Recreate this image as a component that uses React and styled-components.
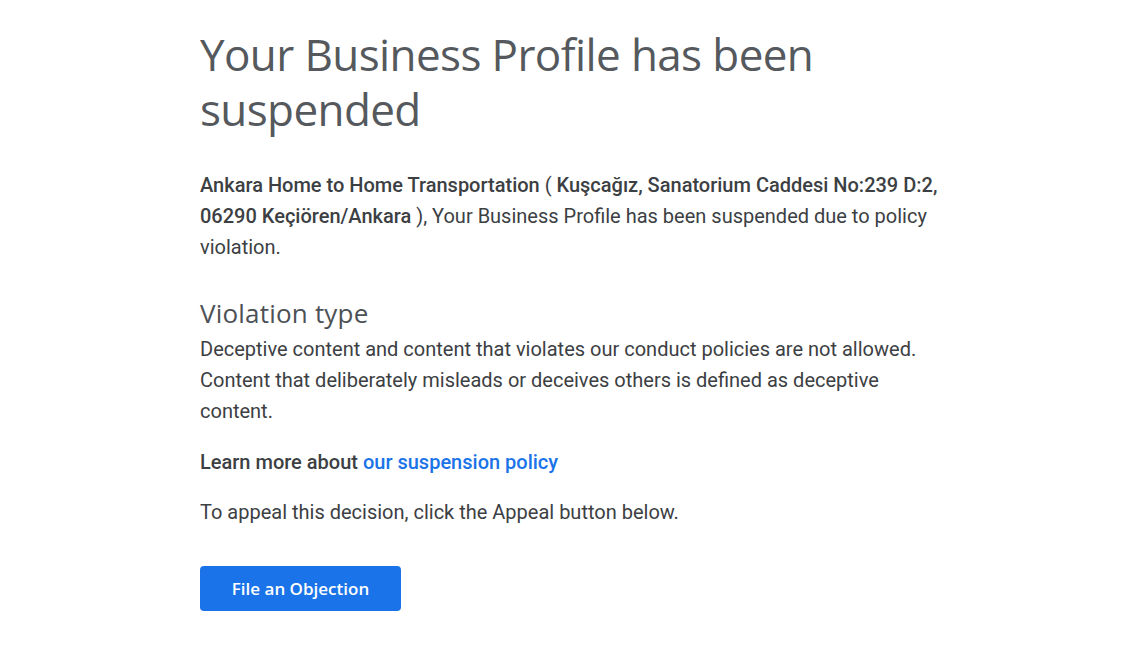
import React from "react";
import styled, { createGlobalStyle } from "styled-components";

const Global = createGlobalStyle`
  html, body { margin: 0; padding: 0; background: #ffffff; }
  body { font-family: Roboto, "Noto Sans", Arial, sans-serif; }
`;

const Page = styled.main`
  width: 745px;
  margin: 0 auto;
  padding-top: 27px;
  display: flex;
  flex-direction: column;
`;

const Title = styled.h1`
  margin: 0;
  font-family: "Open Sans", Inter, sans-serif;
  font-weight: 400;
  font-size: 44px;
  line-height: 55px;
  letter-spacing: -0.6px;
  color: #55595d;
`;

const Paragraph = styled.p`
  margin: ${(p) => p.$mt || 0}px 0 0;
  font-family: Roboto, Arial, sans-serif;
  font-size: 20px;
  line-height: 31px;
  color: #3c4043;
  font-weight: ${(p) => (p.$medium ? 500 : 400)};
`;

const Strong = styled.span`
  font-weight: 500;
`;

const SubHeading = styled.h2`
  margin: 33px 0 4px;
  font-family: "Open Sans", Roboto, sans-serif;
  font-weight: 500;
  font-size: 26px;
  line-height: 34px;
  letter-spacing: 0.2px;
  color: #4d5156;
`;

const Link = styled.a`
  color: #1a73e8;
  text-decoration: none;
`;

const Button = styled.button`
  margin-top: 38px;
  align-self: flex-start;
  width: 201px;
  height: 45px;
  border: none;
  border-radius: 4px;
  background: #1a73e8;
  color: #ffffff;
  font-family: "Open Sans", Inter, sans-serif;
  font-weight: 600;
  font-size: 17px;
  cursor: pointer;
`;

export default function App() {
  return (
    <>
      <Global />
      <Page>
        <Title>Your Business Profile has been suspended</Title>
        <Paragraph $mt={33}>
          <Strong>Ankara Home to Home Transportation</Strong> ({" "}
          <Strong>Kuşcağız, Sanatorium Caddesi No:239 D:2, 06290 Keçiören/Ankara</Strong> ), Your
          Business Profile has been suspended due to policy violation.
        </Paragraph>
        <SubHeading>Violation type</SubHeading>
        <Paragraph>
          Deceptive content and content that violates our conduct policies are not allowed.
          Content that deliberately misleads or deceives others is defined as deceptive content.
        </Paragraph>
        <Paragraph $mt={20} $medium>
          Learn more about <Link href="#">our suspension policy</Link>
        </Paragraph>
        <Paragraph $mt={19}>To appeal this decision, click the Appeal button below.</Paragraph>
        <Button>File an Objection</Button>
      </Page>
    </>
  );
}
